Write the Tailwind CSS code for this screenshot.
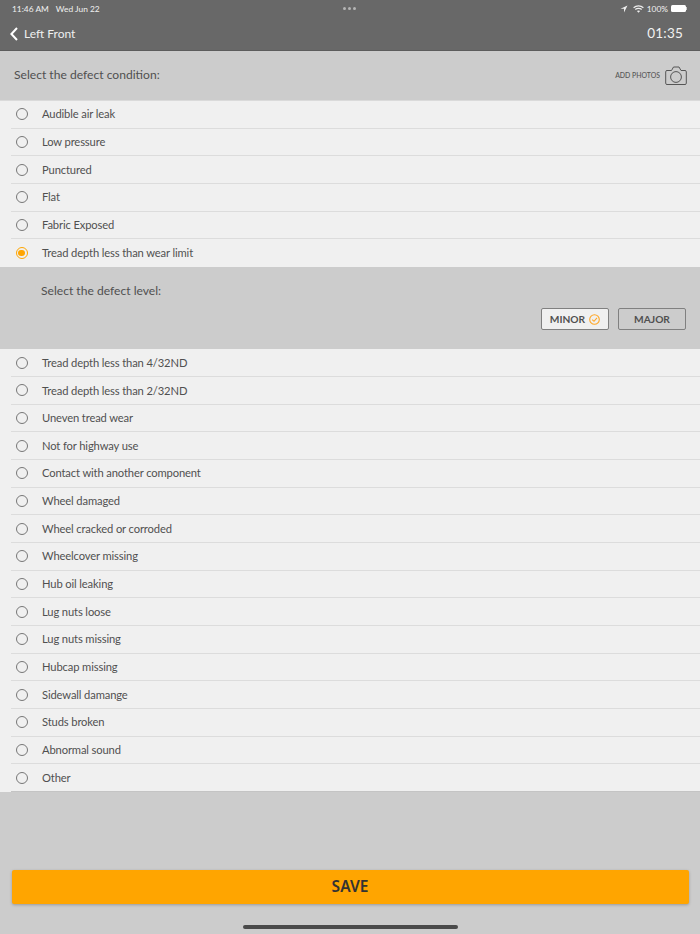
<!DOCTYPE html>
<html lang="en">
<head>
  <meta charset="UTF-8" />
  <meta name="viewport" content="width=device-width, initial-scale=1.0"/>
  <title>Defect</title>
  <script src="https://cdn.jsdelivr.net/npm/@tailwindcss/browser@4"></script>
</head>
<body class="bg-[#cccccc] font-['Lato','Noto_Sans',sans-serif] text-[#505050]">
  <div class="w-[700px] h-[934px] flex flex-col overflow-hidden">
    <header class="h-[51px] shrink-0 bg-[#686868] text-white border-b border-[#5c5c5c]">
      <div class="h-[17px] pl-[12px] pr-[13px] pt-[1px] flex items-center justify-between text-[8.4px] relative">
        <div class="flex gap-[7px] text-[#f0f0f0]"><span>11:46 AM</span><span>Wed Jun 22</span></div>
        <div class="absolute left-[343px] top-[7px] flex gap-[2px]">
          <span class="w-[3px] h-[3px] rounded-full bg-[#b5b5b5]"></span>
          <span class="w-[3px] h-[3px] rounded-full bg-[#b5b5b5]"></span>
          <span class="w-[3px] h-[3px] rounded-full bg-[#b5b5b5]"></span>
        </div>
        <div class="flex items-center gap-[3px] text-[#f0f0f0]">
          <svg width="8" height="8" viewBox="0 0 8 8"><path d="M7.5 .5 L.5 3.7 H4 V7.5 Z" fill="#eee"/></svg>
          <svg class="ml-[2px]" width="11" height="8" viewBox="0 0 11 8" fill="none" stroke="#eee" stroke-width="1.2"><path d="M.6 2.8 C3.4 .2 7.6 .2 10.4 2.8"/><path d="M2.3 4.5 C4 3 7 3 8.7 4.5"/><path d="M5.5 7.8 L3.9 6.1 C4.8 5.4 6.2 5.4 7.1 6.1 Z" fill="#eee" stroke="none"/></svg>
          <span>100%</span>
          <span class="w-[15px] h-[7px] bg-white rounded-[1.5px]"></span>
          <span class="w-[1px] h-[3px] bg-[#ccc] -ml-[3px]"></span>
        </div>
      </div>
      <div class="h-[33px] pl-[10px] pr-[17px] flex items-center justify-between">
        <div class="flex items-center gap-[6px] text-[12px] text-[#efefef] pt-[1px]">
          <svg width="8" height="14" viewBox="0 0 8 14" fill="none" stroke="#fff" stroke-width="2"><path d="M7 1 L1.4 7 L7 13"/></svg>
          <span>Left Front</span>
        </div>
        <span class="text-[13.5px] tracking-[0.2px] text-[#f2f2f2]">01:35</span>
      </div>
    </header>

    <div class="h-[50px] shrink-0 pl-[14px] pr-[13px] flex items-center justify-between border-b border-[#dadada]">
      <span class="text-[12.1px]">Select the defect condition:</span>
      <div class="flex items-center gap-[5px]">
        <span class="text-[6.9px] font-medium text-[#555]">ADD PHOTOS</span>
        <svg width="22" height="20" viewBox="0 0 22 20" fill="none" stroke="#555" stroke-width="1"><path d="M2 4.5 H6.5 L8.5 1 H14 L16 4.5 H20 A1.3 1.3 0 0 1 21.3 5.8 V17.2 A1.3 1.3 0 0 1 20 18.5 H2 A1.3 1.3 0 0 1 .7 17.2 V5.8 A1.3 1.3 0 0 1 2 4.5 Z"/><circle cx="11" cy="11" r="5.4"/></svg>
      </div>
    </div>

    <ul id="conditions" class="shrink-0 bg-[#f0f0f0] text-[11.2px] tracking-[-0.13px]"></ul>

    <section class="h-[82.5px] shrink-0 pl-[41px] pr-[14px] pt-[17px]">
      <p class="text-[12.1px] leading-[14px]">Select the defect level:</p>
      <div class="flex justify-end gap-[9px] mt-[10.5px] font-bold text-[10.2px]">
        <button class="w-[68px] h-[22px] bg-[#f0f0f0] border border-[#808080] rounded-[2px] flex items-center justify-center gap-[4px]">MINOR
          <svg width="11" height="11" viewBox="0 0 11 11" fill="none" stroke="#ffa726" stroke-width="1.1"><circle cx="5.5" cy="5.5" r="4.8"/><path d="M3.2 5.6 L5 7.3 L8 3.8"/></svg>
        </button>
        <button class="w-[68px] h-[22px] bg-[#cccccc] border-[1.5px] border-[#808080] rounded-[2px]">MAJOR</button>
      </div>
    </section>

    <ul id="defects" class="shrink-0 bg-[#f0f0f0] text-[11.2px] tracking-[-0.13px]"></ul>

    <div class="flex-1 flex flex-col justify-end items-center px-[11.5px] pb-[5px]">
      <button class="w-full h-[34px] bg-[#ffa500] rounded-[2px] shadow-[0_1px_3px_rgba(0,0,0,0.25)] font-['Noto_Sans',sans-serif] font-semibold text-[15.5px] text-[#333]">SAVE</button>
      <div class="w-[215px] h-[4px] rounded-full bg-[#4a4a4a] mt-[21px]"></div>
    </div>
  </div>
  <script>
    const conditions = ['Audible air leak', 'Low pressure', 'Punctured', 'Flat', 'Fabric Exposed', 'Tread depth less than wear limit'];
    const defects = ['Tread depth less than 4/32ND', 'Tread depth less than 2/32ND', 'Uneven tread wear', 'Not for highway use',
      'Contact with another component', 'Wheel damaged', 'Wheel cracked or corroded', 'Wheelcover missing', 'Hub oil leaking',
      'Lug nuts loose', 'Lug nuts missing', 'Hubcap missing', 'Sidewall damange', 'Studs broken', 'Abnormal sound', 'Other'];

    function radio(selected) {
      if (selected) {
        return `<span class="w-[12px] h-[12px] rounded-full border-[1.3px] border-[#ffa500] flex items-center justify-center"><span class="w-[6.5px] h-[6.5px] rounded-full bg-[#ffa500]"></span></span>`;
      }
      return `<span class="w-[12px] h-[12px] rounded-full border-[1.3px] border-[#777777]"></span>`;
    }

    function row(label, selected, line) {
      return `<li class="h-[27.67px] pl-[11px]"><div class="h-full pl-[4.5px] flex items-center gap-[14.5px] ${line}">${radio(selected)}<span class="pt-[1px]">${label}</span></div></li>`;
    }

    document.getElementById('conditions').innerHTML = conditions
      .map((c, i) => row(c, i === 5, i === 5 ? '' : 'border-b border-[#dcdcdc]'))
      .join('');
    document.getElementById('defects').innerHTML = defects
      .map((d, i) => row(d, false, i === 15 ? 'border-b border-[#c4c4c4]' : 'border-b border-[#dcdcdc]'))
      .join('');
  </script>
</body>
</html>
